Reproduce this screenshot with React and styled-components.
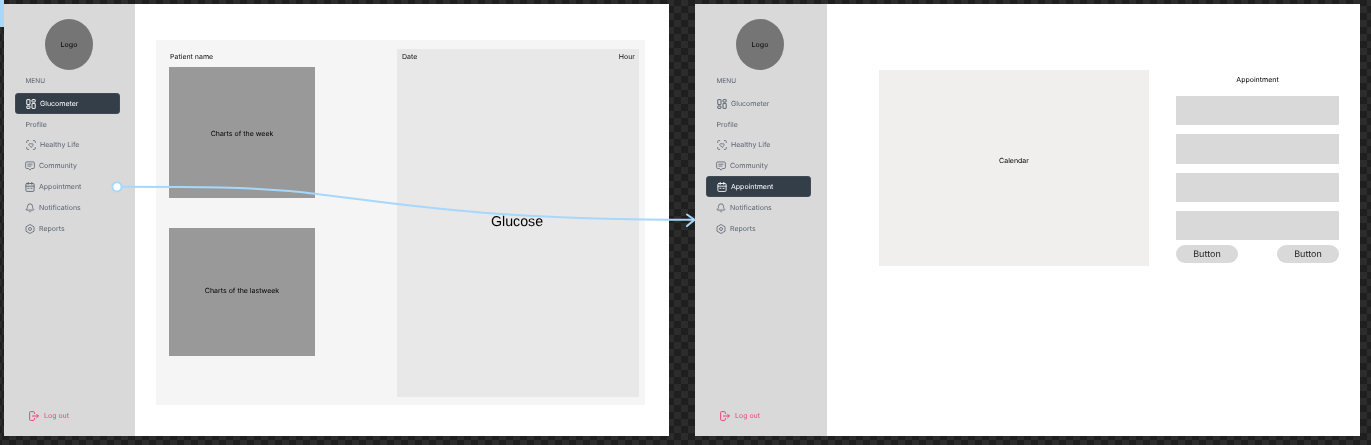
import React from "react";
import styled, { createGlobalStyle } from "styled-components";
import { Bell } from "lucide-react";

const Global = createGlobalStyle`
  html, body { margin: 0; padding: 0; }
  body {
    font-family: "Inter", "Liberation Sans", sans-serif;
    background: #1e1e1e;
    text-rendering: geometricPrecision;
  }
`;

const Canvas = styled.div`
  position: relative;
  width: 1371px;
  height: 445px;
  box-sizing: border-box;
  padding: 4px 0 0 4px;
  display: flex;
  gap: 26px;
  overflow: hidden;
  background-color: #1f1f1f;
  background-image: repeating-conic-gradient(#2c2c2c 0 25%, #1f1f1f 0 50%);
  background-size: 14px 14px;
  background-position: 2px -1px;
  will-change: transform;
`;

const SelectionChip = styled.div`
  position: absolute;
  left: 0;
  top: 0;
  width: 4px;
  height: 27px;
  background: #a6d8fb;
`;

const Frame = styled.section`
  width: 665px;
  height: 432px;
  display: flex;
  background: #fff;
`;

const Sidebar = styled.aside`
  width: ${(p) => p.$w}px;
  flex: none;
  box-sizing: border-box;
  padding: 15px ${(p) => p.$w - 116}px 10px 11px;
  background: #d9d9d9;
  display: flex;
  flex-direction: column;
`;

const Logo = styled.div`
  width: 48px;
  height: 51px;
  margin: 0 0 0 30px;
  border-radius: 50%;
  background: #757575;
  display: flex;
  align-items: center;
  justify-content: center;
  font-size: 7px;
  font-weight: 500;
  color: #111;
`;

const SectionLabel = styled.div`
  height: ${(p) => p.$h}px;
  margin-top: ${(p) => p.$mt || 0}px;
  padding-left: 10.5px;
  display: flex;
  align-items: center;
  font-size: ${(p) => p.$size}px;
  color: #5b6472;
`;

const NavItem = styled.div`
  height: 21px;
  box-sizing: border-box;
  flex: none;
  padding-left: ${(p) => p.$inset}px;
  display: flex;
  align-items: center;
  gap: ${(p) => p.$gap}px;
  border-radius: 4px;
  font-size: 7px;
  font-weight: 400;
  background: ${(p) => (p.$active ? "#343e49" : "transparent")};
  color: ${(p) => (p.$active ? "#fff" : "#5b6472")};
  box-shadow: ${(p) => (p.$active ? "inset 0 0 0 0.5px #4c5560" : "none")};
  svg { flex: none; width: 10px; height: 10px; }
`;

const LogoutItem = styled(NavItem)`
  margin-top: auto;
  color: #e8477a;
  padding-left: 14px;
`;

const PatientPanel = styled.div`
  width: 489px;
  height: 365px;
  margin: 36px 0 0 21px;
  box-sizing: border-box;
  padding: 9px 6px 8px 13px;
  background: #f5f5f5;
  display: flex;
  justify-content: space-between;
`;

const ChartsColumn = styled.div`
  width: 146px;
  display: flex;
  flex-direction: column;
`;

const PanelTitle = styled.div`
  height: 18px;
  padding-left: 1px;
  font-size: 7px;
  line-height: 15px;
  color: #111;
`;

const Chart = styled.div`
  height: ${(p) => p.$h}px;
  margin-bottom: 30px;
  padding-top: ${(p) => p.$drop || 0}px;
  padding-bottom: ${(p) => p.$lift || 0}px;
  box-sizing: border-box;
  background: #999;
  display: flex;
  align-items: center;
  justify-content: center;
  font-size: 7px;
  color: #000;
`;

const HistoryPanel = styled.div`
  width: 242px;
  box-sizing: border-box;
  padding: 3px 4px 0 5px;
  background: #e8e8e8;
  display: flex;
  justify-content: space-between;
  font-size: 7px;
  line-height: 9px;
  color: #111;
`;

const CalendarPanel = styled.div`
  width: 270px;
  height: 196px;
  margin: 66px 27px 0 52px;
  padding-bottom: 16px;
  box-sizing: border-box;
  flex: none;
  background: #f0efed;
  display: flex;
  align-items: center;
  justify-content: center;
  font-size: 7px;
  color: #000;
`;

const BookingColumn = styled.div`
  width: 163px;
  margin-top: 66px;
  display: flex;
  flex-direction: column;
`;

const BookingTitle = styled.div`
  height: 18px;
  margin-bottom: 8px;
  display: flex;
  align-items: center;
  justify-content: center;
  font-size: 7px;
  color: #000;
`;

const Slots = styled.div`
  display: flex;
  flex-direction: column;
  gap: 9px;
`;

const Slot = styled.div`
  height: 29.3px;
  background: #d9d9d9;
`;

const Actions = styled.div`
  margin-top: 4.8px;
  display: flex;
  justify-content: space-between;
`;

const Button = styled.div`
  width: 62px;
  height: 18px;
  box-sizing: border-box;
  padding-top: 1px;
  border-radius: 9px;
  background: #d9d9d9;
  display: flex;
  align-items: center;
  justify-content: center;
  font-size: 9px;
  color: #1e1e1e;
`;

const ConnectorLayer = styled.svg`
  position: absolute;
  left: 0;
  top: 0;
  pointer-events: none;
`;

const ConnectorLabel = styled.div`
  position: absolute;
  left: 491px;
  top: 214px;
  font-family: "Liberation Sans", sans-serif;
  font-size: 14.2px;
  line-height: 16px;
  color: #000;
`;

const GridIcon = () => (
  <svg viewBox="0 0 10 10" fill="none" stroke="currentColor" strokeWidth="1">
    <rect x="0.8" y="0.6" width="3.2" height="5" rx="0.3" />
    <rect x="0.8" y="7" width="3.2" height="2.4" rx="0.3" />
    <rect x="6" y="0.6" width="3.2" height="2.4" rx="0.3" />
    <rect x="6" y="4.4" width="3.2" height="5" rx="0.3" />
  </svg>
);

const FaceScanIcon = () => (
  <svg viewBox="0 0 10 10" fill="none" stroke="currentColor" strokeWidth="0.8" strokeLinecap="round">
    <path d="M0.7 2.6V1.6a1 1 0 0 1 1-1h1M7.3 0.6h1a1 1 0 0 1 1 1v1M9.3 7.4v1a1 1 0 0 1-1 1h-1M2.7 9.4h-1a1 1 0 0 1-1-1v-1" />
    <path d="M5 7.2 3 5.2C2.2 4.2 3.6 2.9 5 4.1 6.4 2.9 7.8 4.2 7 5.2Z" />
  </svg>
);

const ChatIcon = () => (
  <svg viewBox="0 0 10 10" fill="none" stroke="currentColor" strokeWidth="0.8" strokeLinejoin="round">
    <path d="M1.8 0.9H8.2A1.2 1.2 0 0 1 9.4 2.1V6.3A1.2 1.2 0 0 1 8.2 7.5H6.4L5 9.2 3.6 7.5H1.8A1.2 1.2 0 0 1 0.6 6.3V2.1A1.2 1.2 0 0 1 1.8 0.9Z" />
    <path d="M2.8 3.2H7.2M2.8 5.1H6" strokeLinecap="round" />
  </svg>
);

const CalendarIcon = () => (
  <svg viewBox="0 0 10 10" fill="none" stroke="currentColor" strokeWidth="0.9" strokeLinecap="round">
    <rect x="0.9" y="1.5" width="8.2" height="7.9" rx="1" />
    <path d="M0.9 4.2H9.1" />
    <path d="M3.2 0.4V2.4M6.8 0.4V2.4" />
    <path d="M2.8 6.3H4M5.9 6.3H7.1" />
  </svg>
);

const ReportIcon = () => (
  <svg viewBox="0 0 10 10" fill="none" stroke="currentColor" strokeWidth="0.8" strokeLinejoin="round">
    <path d="M5 0.5 9 2.8V7.2L5 9.5 1 7.2V2.8Z" />
    <circle cx="5" cy="5" r="1.5" />
  </svg>
);

const LogoutIcon = () => (
  <svg viewBox="0 0 10 10" fill="none" stroke="currentColor" strokeWidth="1" strokeLinecap="round" strokeLinejoin="round">
    <path d="M5.4 2.6V1.6A1 1 0 0 0 4.4 0.6H1.6A1 1 0 0 0 0.6 1.6V8.4A1 1 0 0 0 1.6 9.4H4.4A1 1 0 0 0 5.4 8.4V7.4" />
    <path d="M3.4 5H9.4M7.6 3.2 9.4 5 7.6 6.8" />
  </svg>
);

const Menu = ({ active }) => {
  const second = active === "Appointment";
  return (
    <Sidebar $w={second ? 132 : 131}>
      <Logo>Logo</Logo>
      <SectionLabel $h={16} $mt={3} $size={6.5}>MENU</SectionLabel>
      <SectionLabel $h={4} $size={6.5} />
      <NavItem $active={!second} $inset={11} $gap={4}><GridIcon />Glucometer</NavItem>
      <SectionLabel $h={20} $size={7}>Profile</SectionLabel>
      <NavItem $inset={11} $gap={4}><FaceScanIcon />Healthy Life</NavItem>
      <NavItem $inset={10} $gap={4}><ChatIcon />Community</NavItem>
      <NavItem $active={second} $inset={second ? 11 : 10} $gap={4}><CalendarIcon />Appointment</NavItem>
      <NavItem $inset={10} $gap={4}><Bell strokeWidth={2} />Notifications</NavItem>
      <NavItem $inset={10} $gap={4}><ReportIcon />Reports</NavItem>
      <LogoutItem $gap={5}><LogoutIcon />Log out</LogoutItem>
    </Sidebar>
  );
};

export default function App() {
  return (
    <Canvas>
      <Global />
      <SelectionChip />
      <Frame>
        <Menu active="Glucometer" />
        <PatientPanel>
          <ChartsColumn>
            <PanelTitle>Patient name</PanelTitle>
            <Chart $h={131} $drop={2}>Charts of the week</Chart>
            <Chart $h={128} $lift={4}>Charts of the lastweek</Chart>
          </ChartsColumn>
          <HistoryPanel>
            <span>Date</span>
            <span>Hour</span>
          </HistoryPanel>
        </PatientPanel>
      </Frame>
      <Frame>
        <Menu active="Appointment" />
        <CalendarPanel>Calendar</CalendarPanel>
        <BookingColumn>
          <BookingTitle>Appointment</BookingTitle>
          <Slots>
            <Slot />
            <Slot />
            <Slot />
            <Slot />
          </Slots>
          <Actions>
            <Button>Button</Button>
            <Button>Button</Button>
          </Actions>
        </BookingColumn>
      </Frame>
      <ConnectorLayer width="1371" height="445" viewBox="0 0 1371 445">
        <path d="M117 186.8 C 200 186.8 250 187 300 192 C 390 202 470 219.5 694 219.8" fill="none" stroke="#a6d8fb" strokeWidth="2" />
        <path d="M687 214.5 L694.5 219.8 L687 226" fill="none" stroke="#a6d8fb" strokeWidth="2" strokeLinecap="round" strokeLinejoin="round" />
        <circle cx="117" cy="186.8" r="4.6" fill="#fff" stroke="#a6d8fb" strokeWidth="2" />
      </ConnectorLayer>
      <ConnectorLabel>Glucose</ConnectorLabel>
    </Canvas>
  );
}
